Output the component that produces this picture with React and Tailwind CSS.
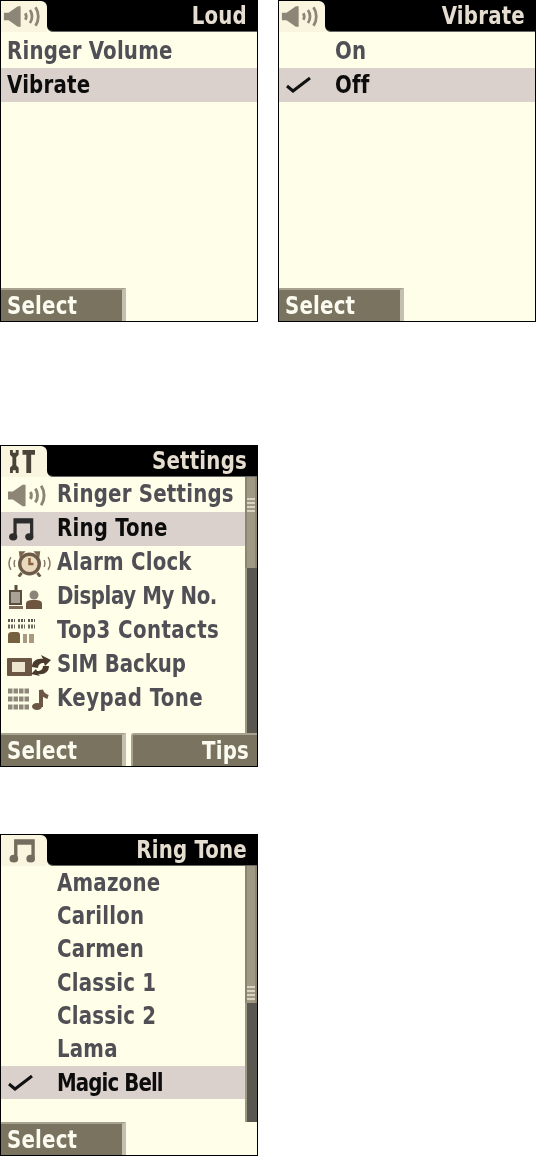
const Speaker = ({ className = "" }) => (
  <svg viewBox="0 0 42 24" className={className} fill="none">
    <path d="M1 8h5l10-7h3v22h-3L6 16H1z" fill="currentColor" />
    <path d="M24 8.500c1.500 2.500 1.500 4.500 0 7" stroke="currentColor" strokeWidth="3" />
    <path d="M29 5c3 4 3 10 0 14" stroke="currentColor" strokeWidth="3" />
    <path d="M35 2c4 6 4 14 0 20" stroke="currentColor" strokeWidth="3" />
  </svg>
);

const Note = ({ className = "" }) => (
  <svg viewBox="0 0 28 26" className={className} fill="none">
    <path d="M7 20V3h18v17" stroke="currentColor" strokeWidth="3.500" />
    <path d="M7 4.500h18" stroke="currentColor" strokeWidth="5" />
    <ellipse cx="5" cy="21.500" rx="4.500" ry="4" fill="currentColor" />
    <ellipse cx="22.500" cy="21.500" rx="4.500" ry="4" fill="currentColor" />
  </svg>
);

const Tools = ({ className = "" }) => (
  <svg viewBox="0 0 28 26" className={className} fill="currentColor">
    <path d="M1 1h3v3h3V1h3v5L7.500 8.500V17L10 19.500V25H7v-3H4v3H1v-5.500L3.500 17V8.500L1 6z" />
    <path d="M14 1h13v5h-4v19h-5V6h-4z" />
  </svg>
);

const Alarm = ({ className = "" }) => (
  <svg viewBox="0 0 44 28" className={className} fill="none">
    <path d="M3 8c-2.500 4-2.500 9 0 13M41 8c2.500 4 2.500 9 0 13M7 11c-1 2.500-1 4.500 0 7M37 11c1 2.500 1 4.500 0 7" stroke="#8a7a68" strokeWidth="1.500" />
    <circle cx="22" cy="15" r="10" fill="#e9d9bd" stroke="#6d5a48" strokeWidth="3.500" />
    <path d="M22 9v6h4" stroke="#8a6040" strokeWidth="2.500" />
    <path d="M11 2h7l-6 7zM33 2h-7l6 7z" fill="#7a6650" />
    <path d="M14 24l-3 4M30 24l3 4" stroke="#6d5a48" strokeWidth="3" />
  </svg>
);

const Contact = ({ className = "" }) => (
  <svg viewBox="0 0 33 24" className={className} fill="none">
    <rect x="1" y="6" width="11" height="13" fill="#aaa296" stroke="#5b4c40" strokeWidth="2" />
    <path d="M7 0v6" stroke="#5b4c40" strokeWidth="3" />
    <path d="M0 22.500h14" stroke="#7d6a56" strokeWidth="3" />
    <circle cx="25" cy="10" r="4.500" fill="#8c8478" />
    <path d="M17 24v-5c0-3 2-4 8-4s8 1 8 4v5z" fill="#6d5540" />
  </svg>
);

const Top3 = ({ className = "" }) => (
  <svg viewBox="0 0 27 24" className={className} fill="none">
    <path d="M0 1.500h7M10 1.500h7M20 1.500h7" stroke="#5f5a50" strokeWidth="3" strokeDasharray="2 1" />
    <path d="M0 7.500h7M10 7.500h7M20 7.500h7" stroke="#6f695e" strokeWidth="4" strokeDasharray="2 1" />
    <path d="M0 24v-8q0-3 4-3h5q3 0 3 3v8z" fill="#75603f" />
    <path d="M15 24v-9h4v9zM21 24v-9h5v9z" fill="#a8997f" />
  </svg>
);

const Sim = ({ className = "" }) => (
  <svg viewBox="0 0 44 21" className={className} fill="none">
    <rect x="0" y="3" width="25" height="18" rx="1" fill="#6b5744" />
    <rect x="5" y="7" width="13" height="10" fill="#efe6d2" />
    <path d="M25 12c0-6 5-9 11-8l-2-4 10 5-6 6-1-3c-4 0-6 2-6 5z" fill="#4b3b2e" />
    <path d="M42 11c0 6-5 9-11 8l2 2-9-2 5-5 1 2c4 0 6-2 6-5z" fill="#4b3b2e" />
  </svg>
);

const Keypad = ({ className = "" }) => (
  <svg viewBox="0 0 42 22" className={className} fill="none">
    <path d="M0 3h22M0 11h22M0 19h22" stroke="#8f877a" strokeWidth="5" strokeDasharray="4.500 1" />
    <path d="M33 19V2q1 5 7 7" stroke="#6b5744" strokeWidth="4" />
    <ellipse cx="29" cy="18.500" rx="5" ry="3.500" fill="#6b5744" />
  </svg>
);

const Check = () => (
  <svg viewBox="0 0 26 16" className="w-[26px] h-[16px]" fill="none">
    <path d="M1 9l6 5L24 1" stroke="#111" strokeWidth="3" />
  </svg>
);

const settingsRows = [
  { label: "Ringer Settings", icon: <Speaker className="w-[41px] h-[25px] text-[#8d8677] -ml-[1px]" /> },
  { label: "Ring Tone", icon: <Note className="w-[27px] h-[24px] text-[#2c2c2c]" />, active: true },
  { label: "Alarm Clock", icon: <Alarm className="w-[43px] h-[28px]" /> },
  { label: "Display My No.", icon: <Contact className="w-[33px] h-[24px] ml-[1px]" />, tracking: "tracking-[-0.4px]" },
  { label: "Top3 Contacts", icon: <Top3 className="w-[27px] h-[24px]" />, tracking: "tracking-[0.4px]" },
  { label: "SIM Backup", icon: <Sim className="w-[44px] h-[21px] -ml-[1px]" />, tracking: "tracking-[-0.1px]" },
  { label: "Keypad Tone", icon: <Keypad className="w-[42px] h-[22px]" />, tracking: "tracking-[0.4px]" },
];

const toneRows = ["Amazone", "Carillon", "Carmen", "Classic 1", "Classic 2", "Lama"].map((label) => ({ label }));

function SoftKey({ label, wide }) {
  return (
    <div className={`h-[33px] bg-[#7a735f] border-t-2 border-t-[#a8a290] text-[#fbfbf0] flex items-center ${wide ? "flex-1 rounded-tl-[3px] justify-end pr-[8px] border-l-2 border-l-[#a8a290]" : "w-[125px] pl-[6px] border-r-4 border-r-[#c4bfae]"}`}>
      <span className="inline-block scale-y-[1.12]">{label}</span>
    </div>
  );
}

function Row({ row, inset, rowHeight, textNudge }) {
  return (
    <div className={`${rowHeight} flex items-center ${row.active ? "bg-[#dad0cc] text-[#0c0c0c]" : "text-[#4f4f55]"}`}>
      {inset ? (
        <div className="w-[56px] shrink-0 flex items-center pl-[7px]">
          {row.checked && <Check />}
          {row.icon}
        </div>
      ) : null}
      <span className={`inline-block scale-y-[1.15] ${textNudge} ${row.tracking || ""} ${inset ? "" : "pl-[6px]"}`}>{row.label}</span>
    </div>
  );
}

function Scrollbar({ thumbHeight, gripTop }) {
  return (
    <div className="w-[12px] shrink-0 flex flex-col">
      <div className="bg-[#a09a84] border-x-2 border-x-[#8c8670]" style={{ height: thumbHeight }}>
        <div className="flex flex-col gap-[2px]" style={{ paddingTop: gripTop }}>
          <div className="h-[2px] bg-[#d8d4c0]" />
          <div className="h-[2px] bg-[#d8d4c0]" />
          <div className="h-[2px] bg-[#d8d4c0]" />
          <div className="h-[2px] bg-[#d8d4c0]" />
        </div>
      </div>
      <div className="flex-1 bg-[#585850] border-l-2 border-l-[#9e9880]" />
    </div>
  );
}

function Screen({ title, tabIcon, rows, inset, scroll, softRight, listPad = "", rowHeight = "h-[34px]", textNudge = "", className = "" }) {
  return (
    <div className={`w-[258px] h-[322px] shrink-0 bg-[#fffee8] border border-black flex flex-col overflow-hidden text-[22px] leading-none font-bold tracking-[0.2px] ${className}`}>
      <div className="h-[31px] shrink-0 flex bg-[linear-gradient(to_bottom,black_50%,#fffee8_50%)]">
        <div className="w-[46px] shrink-0 bg-[#f9f5df] rounded-tr-[6px] flex items-center justify-center pr-[3px]">{tabIcon}</div>
        <div className="flex-1 bg-black rounded-bl-[6px] border-b border-b-[#666] text-[#e4ddd0] flex items-center justify-end pr-[10px]">
          <span className="inline-block scale-y-[1.12]">{title}</span>
        </div>
      </div>
      <div className="flex-1 flex min-h-0">
        <div className={`flex-1 min-w-0 ${listPad}`}>
          {rows.map((row) => (
            <Row key={row.label} row={row} inset={inset} rowHeight={rowHeight} textNudge={textNudge} />
          ))}
        </div>
        {scroll && <Scrollbar {...scroll} />}
      </div>
      <div className="flex gap-[5px] shrink-0">
        <SoftKey label="Select" />
        {softRight && <SoftKey label={softRight} wide />}
      </div>
    </div>
  );
}

export default function App() {
  const speaker = <Speaker className="w-[39px] h-[23px] shrink-0 text-[#8d8677]" />;
  return (
    <div className="w-[536px] h-[1156px] bg-white overflow-hidden blur-[0.4px] font-['DejaVu_Sans_Condensed','DejaVu_Sans',sans-serif]">
      <div className="flex gap-[20px]">
        <Screen
          title="Loud"
          tabIcon={speaker}
          listPad="pt-[2px]"
          rows={[{ label: "Ringer Volume" }, { label: "Vibrate", active: true }]}
        />
        <Screen
          title="Vibrate"
          tabIcon={speaker}
          listPad="pt-[2px]"
          inset
          rows={[{ label: "On" }, { label: "Off", active: true, checked: true }]}
        />
      </div>
      <Screen
        className="mt-[123px]"
        title="Settings"
        tabIcon={<Tools className="w-[27px] h-[25px] text-[#4a4438]" />}
        inset
        listPad="pt-[1px]"
        textNudge="-translate-y-[1px]"
        rows={settingsRows}
        softRight="Tips"
        scroll={{ thumbHeight: 91, gripTop: 21 }}
      />
      <Screen
        className="mt-[67px]"
        title="Ring Tone"
        tabIcon={<Note className="w-[27px] h-[25px] text-[#746c5e]" />}
        inset
        rowHeight="h-[33.33px]"
        rows={[...toneRows, { label: "Magic Bell", active: true, checked: true, tracking: "tracking-[-0.9px]" }]}
        scroll={{ thumbHeight: 137, gripTop: 120 }}
      />
    </div>
  );
}
